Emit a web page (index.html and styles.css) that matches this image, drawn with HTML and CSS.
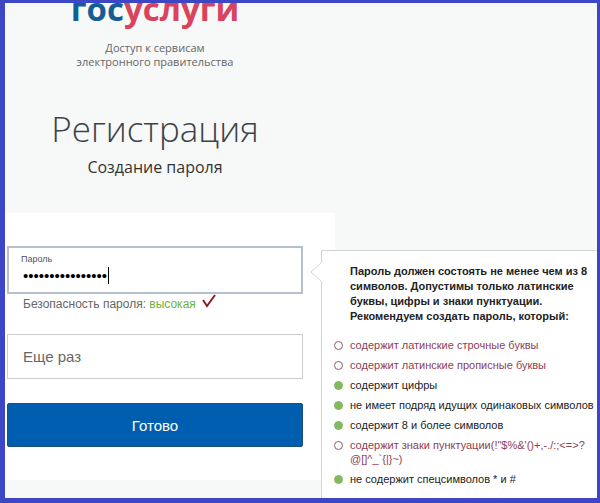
FILE: index.html
```
<!DOCTYPE html>
<html lang="ru">

<head>
    <meta charset="utf-8">
    <meta name="viewport" content="width=device-width, initial-scale=1">
    <title>Регистрация</title>
    <link rel="stylesheet" href="styles.css">
</head>

<body>
    <div class="page">
        <header class="header">
            <a class="logo" href="#"><span class="logo-blue">гос</span><span class="logo-red">услуги</span></a>
            <p class="slogan">Доступ к сервисам<br>электронного правительства</p>
            <h1>Регистрация</h1>
            <h2>Создание пароля</h2>
        </header>

        <main class="card">
            <form class="form" autocomplete="off">
                <div class="field field-active">
                    <label for="password">Пароль</label>
                    <input type="password" id="password" value="Password12345678">
                    <span class="caret"></span>
                </div>
                <p class="strength">
                    Безопасность пароля: <span class="strong">высокая</span>
                    <svg class="check" width="14" height="14" viewBox="0 0 14 14">
                        <path d="M1 6 L5 12 L13 1" fill="none" stroke="#8c1c24" stroke-width="2"/>
                    </svg>
                </p>
                <input class="repeat" type="password" placeholder="Еще раз" aria-label="Еще раз">
                <button class="submit" type="button">Готово</button>
            </form>
            <aside class="hint">
                <svg class="arrow" width="12" height="22" viewBox="0 0 12 22">
                    <path d="M12 1 L1 11 L12 21" fill="#fff" stroke="#d2d3d5"/>
                </svg>
                <p class="hint-title">Пароль должен состоять не менее чем из 8 символов. Допустимы только латинские буквы, цифры и знаки пунктуации. Рекомендуем создать пароль, который:</p>
                <ul class="rules">
                    <li>содержит латинские строчные буквы</li>
                    <li>содержит латинские прописные буквы</li>
                    <li class="done">содержит цифры</li>
                    <li class="done">не имеет подряд идущих одинаковых символов</li>
                    <li class="done">содержит 8 и более символов</li>
                    <li>содержит знаки пунктуации(!"$%&amp;'()+,-./:;&lt;=&gt;?<br>@[]^_`{|}~)</li>
                    <li class="done">не содержит спецсимволов * и #</li>
                </ul>
            </aside>
        </main>
    </div>
</body>
</html>
```

FILE: styles.css
```
* {
    box-sizing: border-box;
}

body {
    margin: 0;
    font-family: "Liberation Sans", Arial, sans-serif;
    color: #222;
}

.page {
    min-height: 100vh;
    overflow: hidden;
    border: solid #3d46c4;
    border-width: 3px 3px 5px 5px;
    background: #f7f8f8;
}

.header {
    display: flow-root;
    width: 300px;
    height: 210px;
    text-align: center;
    font-family: "Open Sans", "Noto Sans", sans-serif;
}

.logo {
    display: block;
    margin-top: -14px;
    font-size: 33px;
    line-height: 40px;
    font-weight: 700;
    text-decoration: none;
}

.logo-blue {
    color: #155e95;
}

.logo-red {
    color: #d9435c;
}

.slogan {
    margin: 12px 0 0;
    font-size: 11px;
    line-height: 14px;
    color: #666;
}

h1 {
    margin: 36px 0 0;
    font-size: 35px;
    line-height: 48px;
    font-weight: 300;
    color: #3c4347;
}

h2 {
    margin: 2px 0 0;
    font-size: 16px;
    line-height: 24px;
    font-weight: 400;
    color: #333;
}

.card {
    position: relative;
    padding-bottom: 18px;
}

.form {
    width: 330px;
    padding: 33px 32px 33px 2px;
    background: #fff;
}

.field {
    position: relative;
    height: 48px;
    padding: 5px 12px;
    border: 1px solid #ccc;
    background: #fff;
}

.field-active {
    border: 2px solid #b4c0cb;
}

.field label {
    display: block;
    font-size: 9px;
    line-height: 12px;
    color: #555;
}

.field input {
    display: block;
    width: 100%;
    height: 20px;
    padding: 0 2px;
    border: 0;
    outline: 0;
    font-family: inherit;
    font-size: 15px;
    color: #000;
}

.caret {
    position: absolute;
    left: 99px;
    top: 19px;
    width: 1px;
    height: 17px;
    background: #000;
}

.strength {
    margin: 0 0 0 16px;
    height: 40px;
    font-size: 12px;
    line-height: 20px;
    color: #666;
}

.strong {
    color: #6cb33f;
}

.check {
    margin-left: 3px;
}

.repeat {
    display: block;
    width: 100%;
    height: 45px;
    padding: 0 15px;
    border: 1px solid #ccc;
    font-family: inherit;
    font-size: 15px;
}

.repeat::placeholder {
    color: #666;
}

.submit {
    display: block;
    width: 100%;
    height: 44px;
    margin-top: 24px;
    border: 1px solid #1d4f7c;
    border-radius: 2px;
    background: #005eb0;
    color: #fff;
    font-family: inherit;
    font-size: 15px;
}

/* подсказка поверх карточки */
.hint {
    position: absolute;
    top: 37px;
    left: 316px;
    right: 0;
    bottom: 0;
    padding: 13px 0 0 12px;
    border: solid #d2d3d5;
    border-width: 1px 0 0 1px;
    background: #fff;
}

.arrow {
    position: absolute;
    left: -12px;
    top: 10px;
}

.hint-title {
    margin: 0 0 14px 16px;
    font-size: 11px;
    line-height: 15px;
    font-weight: 700;
}

.rules {
    margin: 0;
    padding: 0;
    list-style: none;
    font-size: 11px;
    line-height: 14px;
}

.rules li {
    position: relative;
    margin-bottom: 6px;
    padding-left: 16px;
    color: #8f4055;
}

.rules li::before {
    content: "";
    position: absolute;
    left: 0;
    top: 3px;
    width: 9px;
    height: 9px;
    box-sizing: border-box;
    border: 1px solid #8f5a6a;
    border-radius: 50%;
}

.rules .done {
    color: #222;
}

.rules .done::before {
    border-color: #84b860;
    background: #84b860;
}
```
